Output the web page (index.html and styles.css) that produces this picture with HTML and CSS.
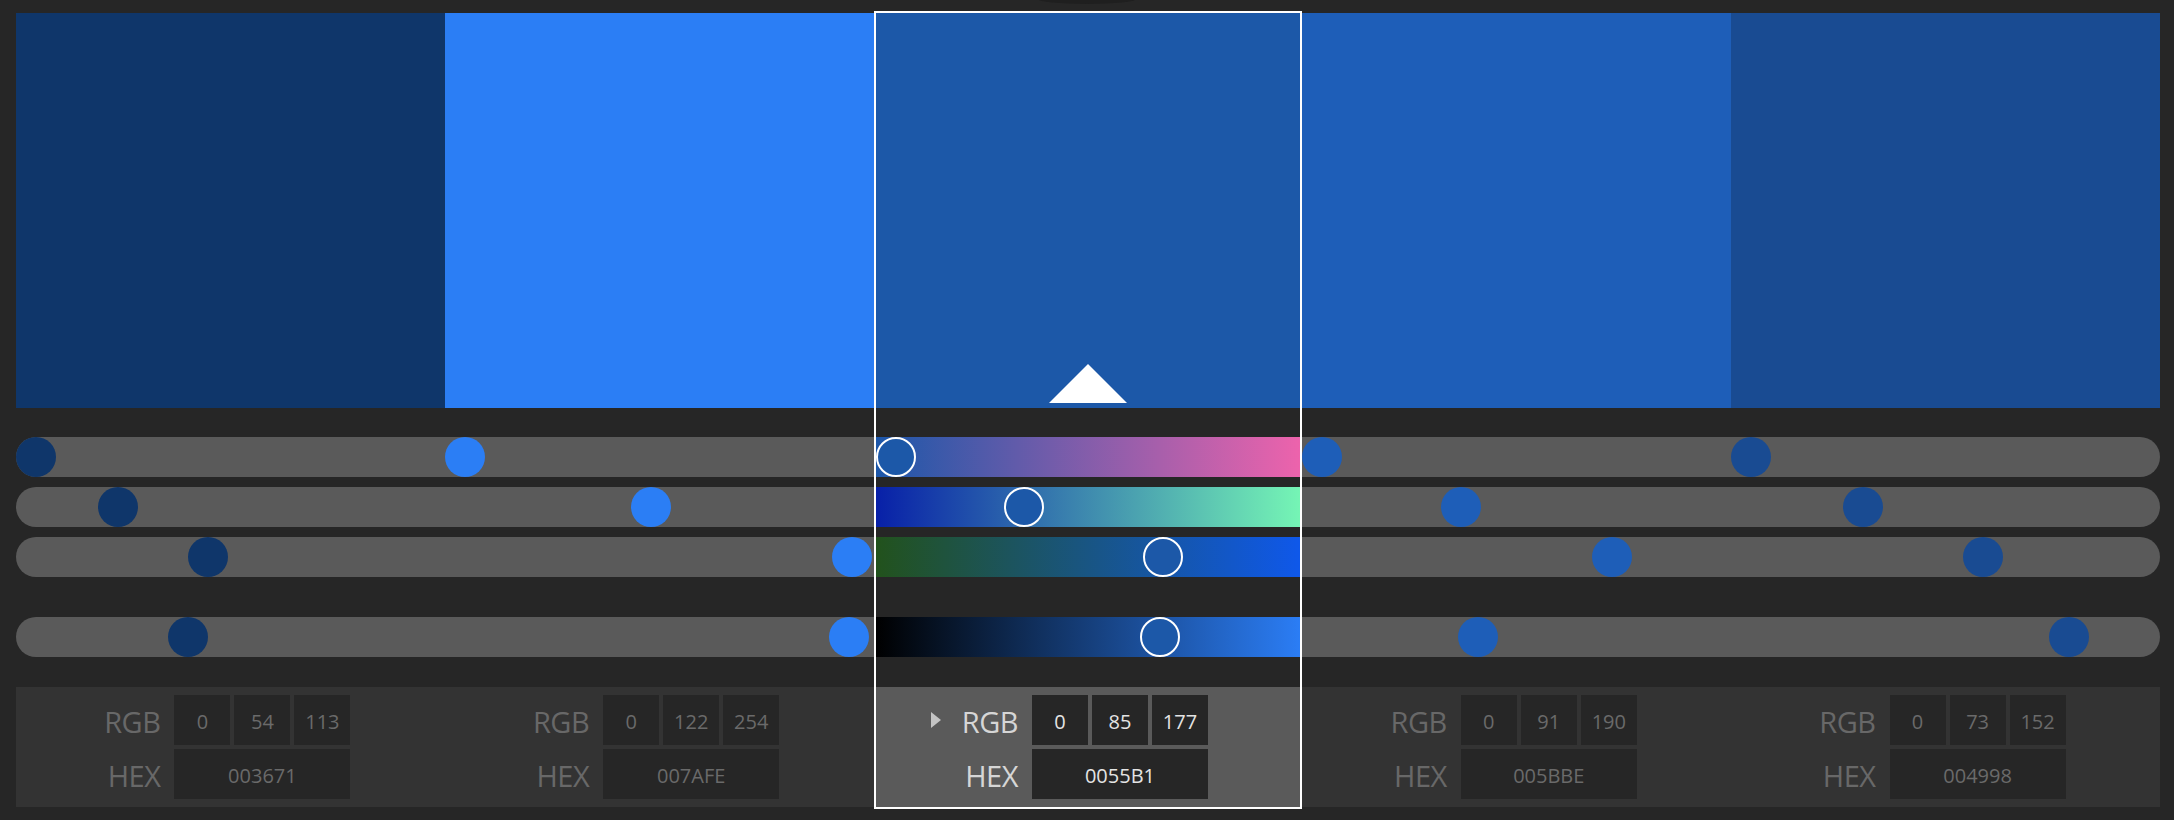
FILE: index.html
```html
<!DOCTYPE html>
<html lang="en">
<head>
<meta charset="utf-8">
<title>Color Palette</title>
<link rel="stylesheet" href="styles.css">
</head>
<body>
<div class="app">
  <div class="shade"></div>
  <div class="col c1">
    <div class="swatch"></div>
    <div class="tracks">
      <div class="track"><span class="dot" style="--p:0"></span></div>
      <div class="track"><span class="dot" style="--p:0.2118"></span></div>
      <div class="track"><span class="dot" style="--p:0.4431"></span></div>
      <div class="track gap"><span class="dot" style="--p:0.391"></span></div>
    </div>
    <div class="panel">
      <div class="label">RGB</div>
      <div class="val">0</div><div class="val">54</div><div class="val">113</div>
      <div class="label">HEX</div>
      <div class="val hex">003671</div>
    </div>
  </div>
  <div class="col c2">
    <div class="swatch"></div>
    <div class="tracks">
      <div class="track"><span class="dot" style="--p:0"></span></div>
      <div class="track"><span class="dot" style="--p:0.4784"></span></div>
      <div class="track"><span class="dot" style="--p:0.9961"></span></div>
      <div class="track gap"><span class="dot" style="--p:0.988"></span></div>
    </div>
    <div class="panel">
      <div class="label">RGB</div>
      <div class="val">0</div><div class="val">122</div><div class="val">254</div>
      <div class="label">HEX</div>
      <div class="val hex">007AFE</div>
    </div>
  </div>
  <div class="col c3 sel">
    <div class="swatch"><span class="marker"></span></div>
    <div class="tracks">
      <div class="track g-r"><span class="dot thumb" style="--p:0"></span></div>
      <div class="track g-g"><span class="dot thumb" style="--p:0.3333"></span></div>
      <div class="track g-b"><span class="dot thumb" style="--p:0.6941"></span></div>
      <div class="track gap g-v"><span class="dot thumb" style="--p:0.687"></span></div>
    </div>
    <div class="panel">
      <div class="label"><span class="play"></span>RGB</div>
      <div class="val">0</div><div class="val">85</div><div class="val">177</div>
      <div class="label">HEX</div>
      <div class="val hex">0055B1</div>
    </div>
  </div>
  <div class="col c4">
    <div class="swatch"></div>
    <div class="tracks">
      <div class="track"><span class="dot" style="--p:0"></span></div>
      <div class="track"><span class="dot" style="--p:0.3569"></span></div>
      <div class="track"><span class="dot" style="--p:0.7451"></span></div>
      <div class="track gap"><span class="dot" style="--p:0.400"></span></div>
    </div>
    <div class="panel">
      <div class="label">RGB</div>
      <div class="val">0</div><div class="val">91</div><div class="val">190</div>
      <div class="label">HEX</div>
      <div class="val hex">005BBE</div>
    </div>
  </div>
  <div class="col c5">
    <div class="swatch"></div>
    <div class="tracks">
      <div class="track"><span class="dot" style="--p:0"></span></div>
      <div class="track"><span class="dot" style="--p:0.2863"></span></div>
      <div class="track"><span class="dot" style="--p:0.5961"></span></div>
      <div class="track gap"><span class="dot" style="--p:0.817"></span></div>
    </div>
    <div class="panel">
      <div class="label">RGB</div>
      <div class="val">0</div><div class="val">73</div><div class="val">152</div>
      <div class="label">HEX</div>
      <div class="val hex">004998</div>
    </div>
  </div>
</div>
</body>
</html>
```

FILE: styles.css
```css
html, body {
  margin: 0;
  padding: 0;
  background: #262626;
  width: 2174px;
  height: 820px;
  overflow: hidden;
  font-family: "Open Sans", "Liberation Sans", sans-serif;
}

.app {
  position: relative;
  box-sizing: border-box;
  width: 2174px;
  padding: 13px 14px 0 16px;
  display: grid;
  grid-template-columns: repeat(5, 1fr);
}

.shade {
  position: absolute;
  top: -6px;
  left: 1038px;
  width: 98px;
  height: 10px;
  border-radius: 50%;
  background: #1f1f1f;
}

.c1 { --c: #0f366a; }
.c2 { --c: #2b7ef5; }
.c3 { --c: #1c58a8; }
.c4 { --c: #1e5eb8; }
.c5 { --c: #194b92; }

.col {
  display: flex;
  flex-direction: column;
  min-width: 0;
}

.col.sel {
  margin-top: -2px;
  border: 2px solid #ffffff;
}

.swatch {
  position: relative;
  height: 395px;
  background: var(--c);
}

.marker {
  position: absolute;
  left: 50%;
  bottom: 5px;
  width: 0;
  height: 0;
  transform: translateX(-50%);
  border-left: 39px solid transparent;
  border-right: 39px solid transparent;
  border-bottom: 39px solid #ffffff;
}

.tracks {
  margin-top: 29px;
  display: flex;
  flex-direction: column;
  gap: 10px;
}

.track {
  position: relative;
  height: 40px;
  background: #5a5a5a;
}

.track.gap {
  margin-top: 30px;
}

.c1 .track { border-radius: 20px 0 0 20px; }
.c5 .track { border-radius: 0 20px 20px 0; }

.g-r { background: linear-gradient(to right, #1c57a9, #ed63ac); }
.g-g { background: linear-gradient(to right, #0820a8, #75f5b5); }
.g-b { background: linear-gradient(to right, #22521c, #0f58ea); }
.g-v { background: linear-gradient(to right, #000000, #2b7df5); }

.dot {
  position: absolute;
  top: 0;
  left: calc(20px + (100% - 40px) * var(--p));
  width: 40px;
  height: 40px;
  box-sizing: border-box;
  border-radius: 50%;
  background: var(--c);
  transform: translateX(-50%);
}

.dot.thumb {
  border: 2px solid #ffffff;
}

.panel {
  margin-top: 30px;
  height: 120px;
  box-sizing: border-box;
  padding: 8px 0;
  background: #333333;
  display: grid;
  grid-template-columns: 154.4px repeat(3, 56px);
  grid-template-rows: 50px 50px;
  gap: 4px;
}

.sel .panel {
  background: #5a5a5a;
  grid-template-columns: 152.4px repeat(3, 56px);
}

.label {
  display: flex;
  align-items: center;
  justify-content: flex-end;
  padding-right: 10px;
  padding-top: 2px;
  font-size: 29px;
  color: #686868;
  letter-spacing: -0.5px;
}

.sel .label {
  color: #d6d6d6;
}

.play {
  width: 0;
  height: 0;
  border-top: 8.5px solid transparent;
  border-bottom: 8.5px solid transparent;
  border-left: 10px solid #c4c4c4;
  margin-right: 21px;
  margin-top: -2px;
}

.val {
  background: #262626;
  display: flex;
  align-items: center;
  justify-content: center;
  padding-top: 3px;
  box-sizing: border-box;
  font-size: 20px;
  color: #6a6a6a;
}

.sel .val {
  color: #e4e4e4;
}

.val.hex {
  grid-column: 2 / span 3;
}
```
